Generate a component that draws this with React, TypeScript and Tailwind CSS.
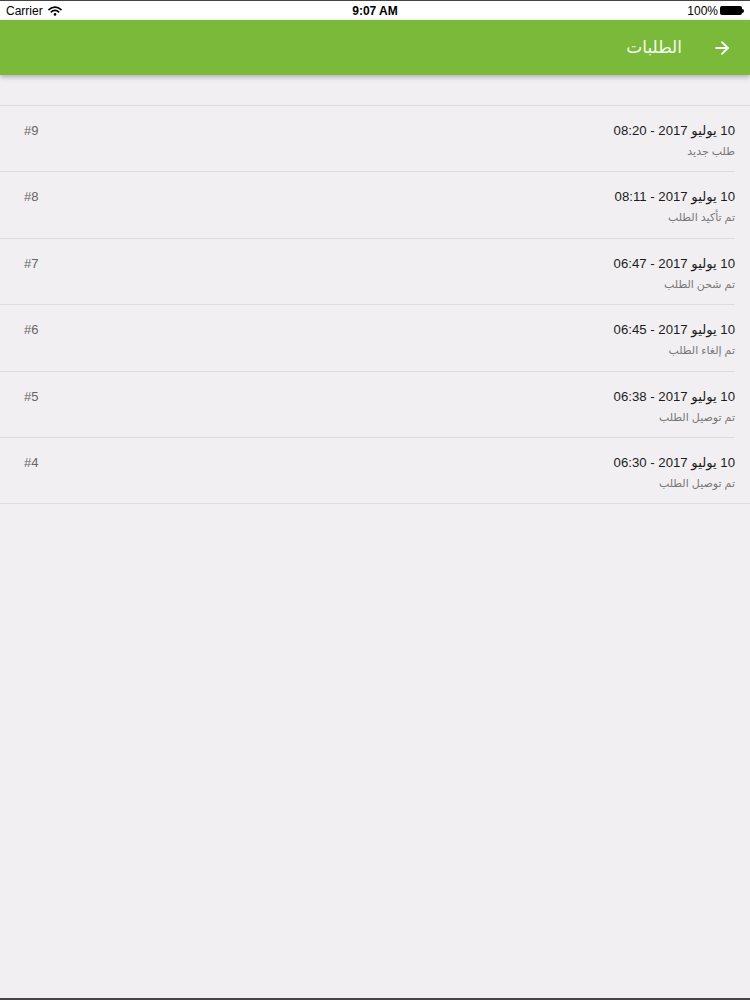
import * as React from "react";
import { ArrowRight } from "lucide-react";

type Order = {
  id: number;
  date: string;
  status: string;
};

const orders: Order[] = [
  { id: 9, date: "10 يوليو 2017 - 08:20", status: "طلب جديد" },
  { id: 8, date: "10 يوليو 2017 - 08:11", status: "تم تأكيد الطلب" },
  { id: 7, date: "10 يوليو 2017 - 06:47", status: "تم شحن الطلب" },
  { id: 6, date: "10 يوليو 2017 - 06:45", status: "تم إلغاء الطلب" },
  { id: 5, date: "10 يوليو 2017 - 06:38", status: "تم توصيل الطلب" },
  { id: 4, date: "10 يوليو 2017 - 06:30", status: "تم توصيل الطلب" }
];

const StatusBar: React.FC = () => (
  <div className="relative flex h-[20px] items-center justify-between border-t border-[#444] bg-white px-[6px] text-[12px] text-black">
    <div className="flex items-center gap-[5px]">
      <span>Carrier</span>
      <svg width="14" height="10" viewBox="0 0 14 10" fill="none">
        <path d="M1 3.6a8.5 8.5 0 0 1 12 0" stroke="#000" strokeWidth="1.6" strokeLinecap="round" />
        <path d="M3.3 5.9a5.2 5.2 0 0 1 7.4 0" stroke="#000" strokeWidth="1.6" strokeLinecap="round" />
        <circle cx="7" cy="8.4" r="1.3" fill="#000" />
      </svg>
    </div>
    <span className="absolute left-1/2 -translate-x-1/2 font-semibold">9:07 AM</span>
    <div className="flex items-center gap-[2px]">
      <span>100%</span>
      <div className="flex items-center">
        <div className="h-[9px] w-[22px] rounded-[2px] bg-black" />
        <div className="h-[4px] w-[2px] rounded-r-sm bg-black" />
      </div>
    </div>
  </div>
);

const OrderRow: React.FC<{ order: Order; last: boolean }> = ({ order, last }) => (
  <div className={last ? "border-b border-[#dddbde]" : "mr-[15px] border-b border-[#dddbde]"}>
    <div className={last ? "flex h-[65.4px] items-start justify-between pr-[15px] pl-[24px] pt-[16px]" : "flex h-[65.4px] items-start justify-between pl-[24px] pt-[16px]"}>
      <div className="text-[13px] leading-[18px] text-[#666]">#{order.id}</div>
      <div dir="rtl" className="flex flex-col items-start">
        <div className="text-[13.2px] leading-[18px] text-[#1c1c1c]">{order.date}</div>
        <div className="mt-[3px] text-[11px] leading-[16px] text-[#777]">{order.status}</div>
      </div>
    </div>
  </div>
);

export default function App() {
  return (
    <div
      className="flex h-[1000px] w-[750px] flex-col overflow-hidden bg-[#f1eff2]"
      style={{ fontFamily: '"Liberation Sans", "DejaVu Sans", sans-serif' }}
    >
      <StatusBar />
      <div className="relative z-10 flex h-[55px] items-center justify-end gap-[30px] bg-[#7bb93b] pr-[18px] shadow-[0_2px_5px_rgba(0,0,0,0.28)]">
        <span dir="rtl" className="text-[17px] text-[#f4fbef]">الطلبات</span>
        <ArrowRight className="h-[20px] w-[20px] text-white" strokeWidth={2.2} />
      </div>
      <div className="h-[31px] border-b border-[#dddbde]" />
      <div className="flex flex-col">
        {orders.map((order, i) => (
          <OrderRow key={order.id} order={order} last={i === orders.length - 1} />
        ))}
      </div>
      <div className="flex-1" />
      <div className="h-[2px] bg-[#444]" />
    </div>
  );
}
